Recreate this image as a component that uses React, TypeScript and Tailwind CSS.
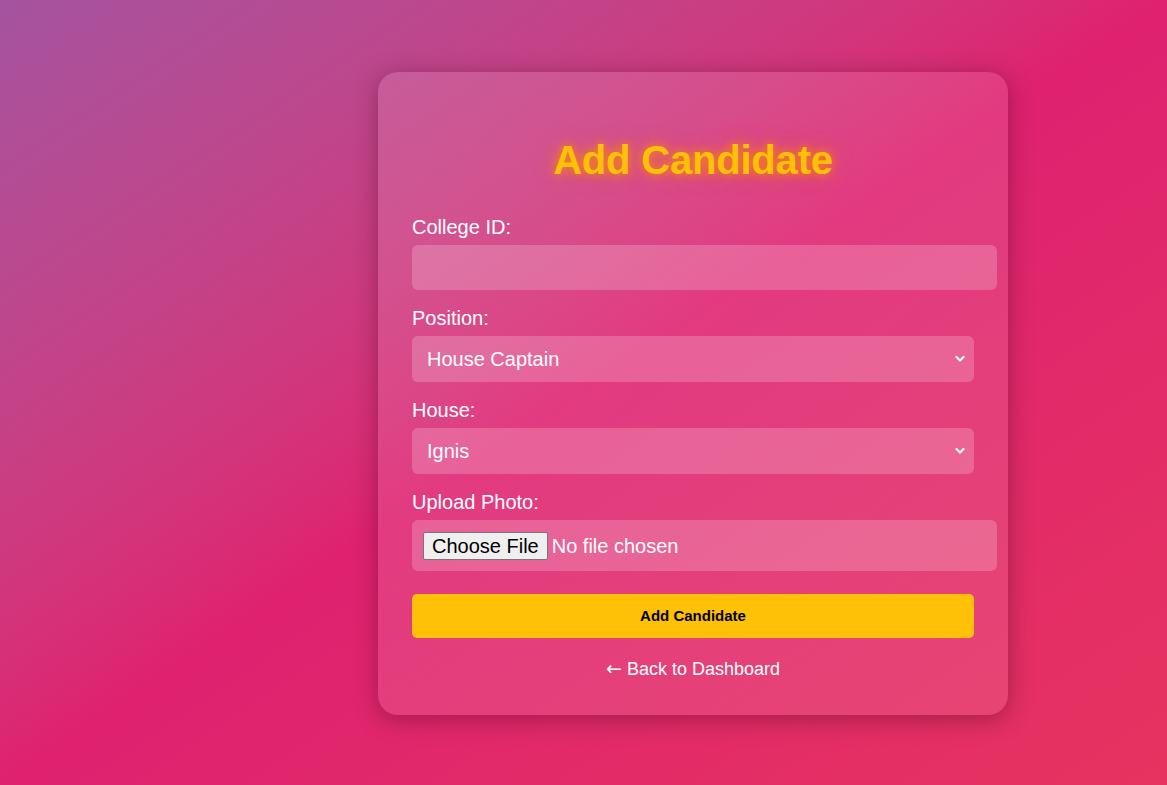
import { useState } from "react";

const positions = ["House Captain", "Vice House Captain", "Sports Captain", "Cultural Secretary"];
const houses = ["Ignis", "Aqua", "Terra", "Ventus"];

function Chevron() {
  return (
    <svg
      className="pointer-events-none absolute right-[9px] top-1/2 -translate-y-1/2"
      width="10"
      height="7"
      viewBox="0 0 10 7"
      fill="none"
    >
      <path d="M1.5 1.5 L5 5 L8.5 1.5" stroke="white" strokeWidth="2" strokeLinecap="square" />
    </svg>
  );
}

function SelectField({ label, value, options, onChange }: { label: string; value: string; options: string[]; onChange: (v: string) => void }) {
  return (
    <div className="mb-[17px]">
      <label className="mb-[6px] block text-[20px] leading-[23px] text-white">{label}</label>
      <div className="relative w-[562px]">
        <select
          value={value}
          onChange={(e) => onChange(e.target.value)}
          className="block h-[46px] w-full appearance-none rounded-[6px] bg-white/20 pl-[15px] pr-8 text-[20px] text-white outline-none"
        >
          {options.map((o) => (
            <option key={o} value={o} className="text-black">
              {o}
            </option>
          ))}
        </select>
        <Chevron />
      </div>
    </div>
  );
}

export default function App() {
  const [collegeId, setCollegeId] = useState("");
  const [position, setPosition] = useState("House Captain");
  const [house, setHouse] = useState("Ignis");

  return (
    <div className="min-h-[785px] w-full bg-gradient-to-br from-[#a5539f] via-[#df2170] to-[#e6335f] pl-[378px] pt-[72px] font-['Liberation_Sans',Arial,sans-serif]">
      <div className="w-[630px] rounded-[20px] bg-gradient-to-br from-white/[0.12] to-white/10 px-[34px] pt-[65px] pb-[35px] shadow-[0_4px_24px_rgba(40,0,20,0.35)]">
        <h2 className="mb-[33px] text-center text-[40px] font-bold leading-[46px] tracking-[-0.2px] text-[#ffc107] [text-shadow:0_0_10px_rgba(255,140,0,0.9),0_0_20px_rgba(255,140,0,0.6)]">
          Add Candidate
        </h2>

        <div className="mb-[17px]">
          <label className="mb-[6px] block text-[20px] leading-[23px] text-white">College ID:</label>
          <input
            value={collegeId}
            onChange={(e) => setCollegeId(e.target.value)}
            className="block h-[45px] w-[585px] rounded-[6px] bg-white/20 px-3 text-[20px] text-white outline-none"
          />
        </div>

        <SelectField label="Position:" value={position} options={positions} onChange={setPosition} />
        <SelectField label="House:" value={house} options={houses} onChange={setHouse} />

        <div className="mb-[23px]">
          <label className="mb-[6px] block text-[20px] leading-[23px] text-white">Upload Photo:</label>
          <div className="flex h-[51px] w-[585px] items-center rounded-[6px] bg-white/20 px-[11px] text-[20px] text-white">
            <span className="mr-[4px] rounded-[2px] border border-[#767676] bg-[#efefef] px-[8px] leading-[26px] text-black">
              Choose File
            </span>
            <span>No file chosen</span>
          </div>
        </div>

        <button className="block h-[44px] w-[562px] rounded-[5px] bg-[#ffc107] text-[15px] font-bold text-black">
          Add Candidate
        </button>

        <div className="mt-[21px] h-[21px] w-[562px] text-center text-[18px] leading-[21px] text-white">
          <a href="#">
            <span className="font-['DejaVu_Sans',sans-serif] text-[19px] leading-none">←</span> Back to Dashboard
          </a>
        </div>
      </div>
    </div>
  );
}
